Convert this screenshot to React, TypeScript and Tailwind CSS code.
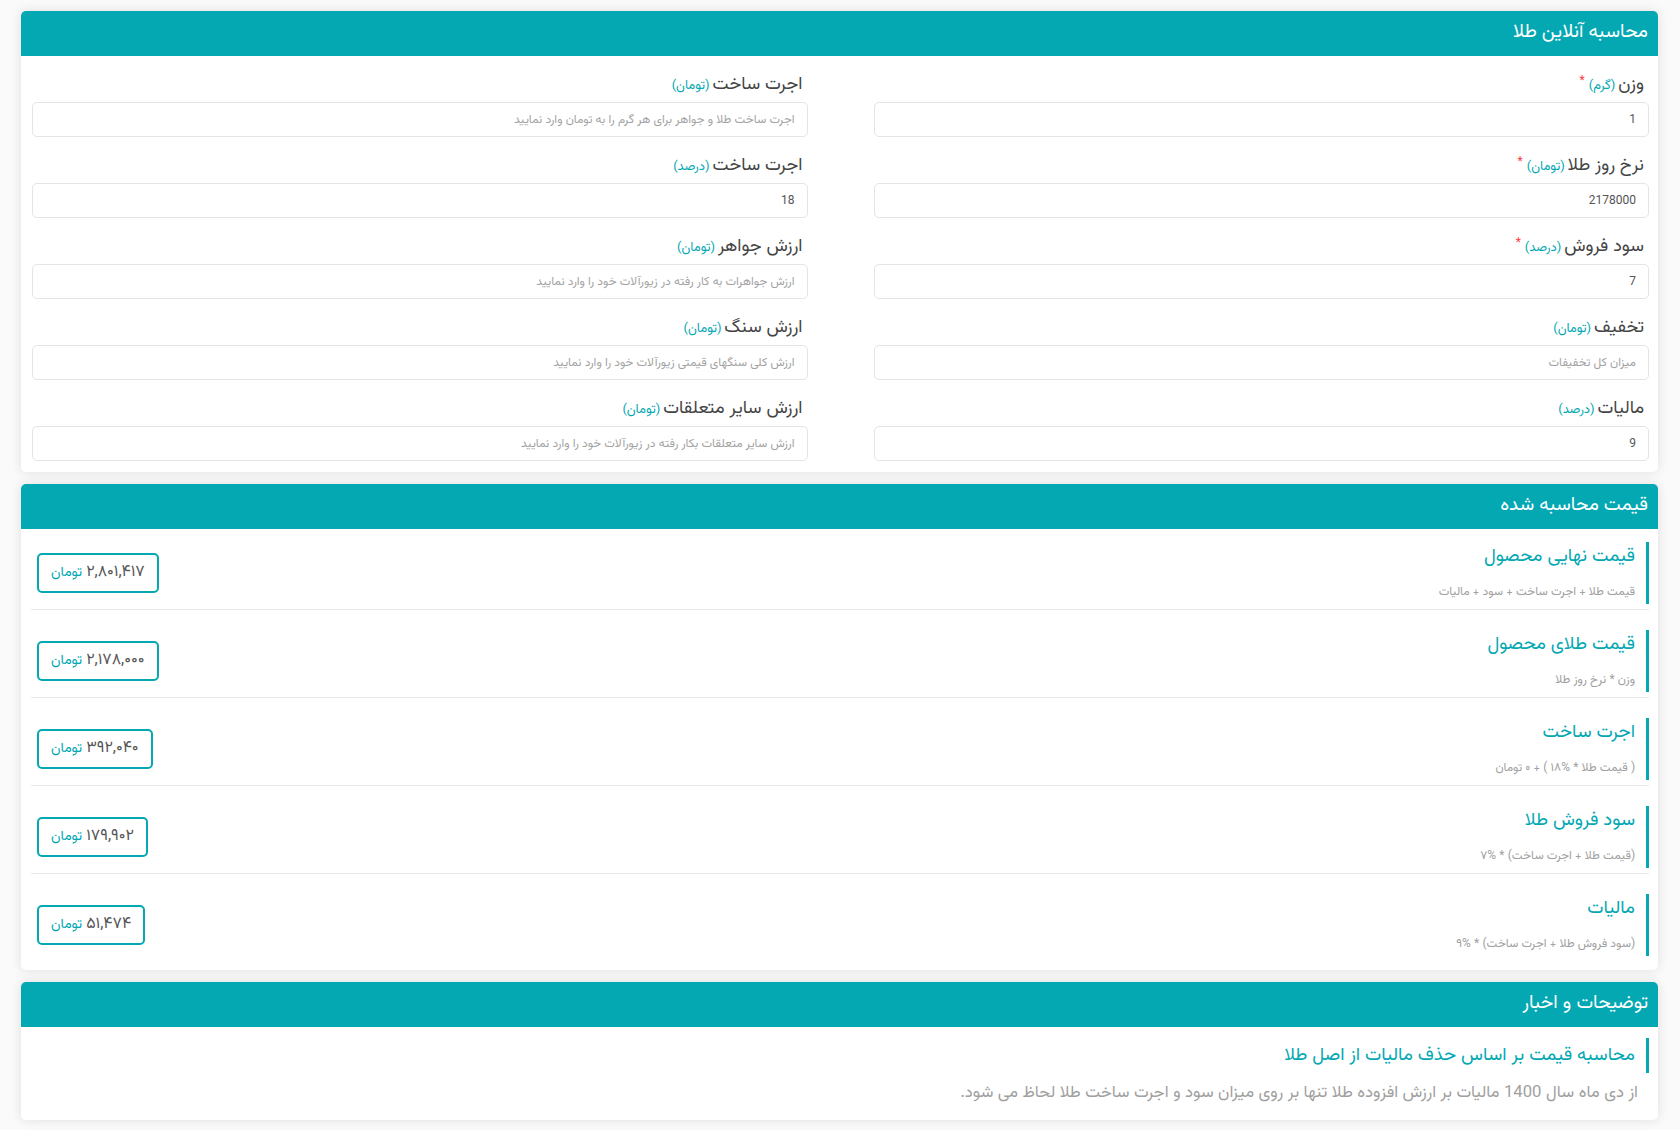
import React from "react";

const TEAL = "#03a8b3";

type Field = {
  label: string;
  unit: string;
  required?: boolean;
  value?: string;
  placeholder?: string;
};

const fields: Field[] = [
  { label: "وزن", unit: "(گرم)", required: true, value: "1" },
  { label: "اجرت ساخت", unit: "(تومان)", placeholder: "اجرت ساخت طلا و جواهر برای هر گرم را به تومان وارد نمایید" },
  { label: "نرخ روز طلا", unit: "(تومان)", required: true, value: "2178000" },
  { label: "اجرت ساخت", unit: "(درصد)", value: "18" },
  { label: "سود فروش", unit: "(درصد)", required: true, value: "7" },
  { label: "ارزش جواهر", unit: "(تومان)", placeholder: "ارزش جواهرات به کار رفته در زیورآلات خود را وارد نمایید" },
  { label: "تخفیف", unit: "(تومان)", placeholder: "میزان کل تخفیفات" },
  { label: "ارزش سنگ", unit: "(تومان)", placeholder: "ارزش کلی سنگهای قیمتی زیورآلات خود را وارد نمایید" },
  { label: "مالیات", unit: "(درصد)", value: "9" },
  { label: "ارزش سایر متعلقات", unit: "(تومان)", placeholder: "ارزش سایر متعلقات بکار رفته در زیورآلات خود را وارد نمایید" },
];

const results = [
  { title: "قیمت نهایی محصول", sub: "قیمت طلا + اجرت ساخت + سود + مالیات", value: "۲,۸۰۱,۴۱۷" },
  { title: "قیمت طلای محصول", sub: "وزن * نرخ روز طلا", value: "۲,۱۷۸,۰۰۰" },
  { title: "اجرت ساخت", sub: "( قیمت طلا * %۱۸ ) + ۰ تومان", value: "۳۹۲,۰۴۰" },
  { title: "سود فروش طلا", sub: "(قیمت طلا + اجرت ساخت) * %۷", value: "۱۷۹,۹۰۲" },
  { title: "مالیات", sub: "(سود فروش طلا + اجرت ساخت) * %۹", value: "۵۱,۴۷۴" },
];

function Header({ title }: { title: string }) {
  return (
    <div className="h-[45px] bg-[#03a8b3] rounded-t-[5px] flex items-center px-[10px] text-white text-[19px]">
      {title}
    </div>
  );
}

export default function App() {
  return (
    <div
      dir="rtl"
      className="min-h-[1130px] bg-[#fafafa] pt-[11px] pb-[11px] pr-[22px] pl-[21px] flex flex-col"
      style={{ fontFamily: '"Vazirmatn", "Noto Sans Arabic", "DejaVu Sans", sans-serif' }}
    >
      {/* Card 1 */}
      <div className="bg-white rounded-[5px] shadow-[0_0_12px_rgba(0,0,0,0.11)]">
        <Header title="محاسبه آنلاین طلا" />
        <div className="grid grid-cols-2 gap-x-[66px] pl-[11px] pr-[9px] pb-[11px]">
          {fields.map((f, i) => (
            <div key={i} className="flex flex-col">
              <div className="h-[46px] pt-[14px] pr-[5px] flex items-start">
                <span className="text-[18px] leading-[30px] text-[#444]">{f.label}</span>
                <span className="text-[13px] leading-[30px] mr-[3px] mt-[1px]" style={{ color: TEAL }}>
                  {f.unit}
                </span>
                {f.required && (
                  <span className="text-[12px] leading-[14px] mr-[4px] mt-[4px] text-[#ff3b3b]">*</span>
                )}
              </div>
              <input
                readOnly
                defaultValue={f.value}
                placeholder={f.placeholder}
                className="h-[35px] w-full border border-[#e4e4e4] rounded-[5px] px-[12px] text-[12px] text-[#555] placeholder:text-[#a3a3a3] outline-none bg-white"
              />
            </div>
          ))}
        </div>
      </div>

      {/* Card 2 */}
      <div className="mt-[12px] bg-white rounded-[5px] shadow-[0_0_12px_rgba(0,0,0,0.11)]">
        <Header title="قیمت محاسبه شده" />
        <div className="pl-[10px] pr-[9px] pb-[9px]">
          {results.map((r, i) => (
            <div
              key={i}
              className={
                "flex items-center justify-between pb-[5px] " +
                (i === 0 ? "pt-[13px] " : "pt-[20px] ") +
                (i < results.length - 1 ? "border-b border-[#e8e8e8]" : "")
              }
            >
              <div className="h-[62px] border-r-[3px] border-[#03a8b3] pr-[11px] flex flex-col">
                <div className="text-[18.5px] leading-[30px]" style={{ color: TEAL }}>
                  {r.title}
                </div>
                <div className="text-[12px] leading-[20px] mt-[10px] text-[#a0a0a0]">{r.sub}</div>
              </div>
              <div className="ml-[6px] h-[40px] border-2 border-[#03a8b3] rounded-[5px] px-[12px] flex items-center gap-[4px]">
                <span className="text-[16px] text-[#555]">{r.value}</span>
                <span className="text-[14px]" style={{ color: TEAL }}>
                  تومان
                </span>
              </div>
            </div>
          ))}
        </div>
      </div>

      {/* Card 3 */}
      <div className="mt-[12px] bg-white rounded-[5px] shadow-[0_0_12px_rgba(0,0,0,0.11)]">
        <Header title="توضیحات و اخبار" />
        <div className="pl-[10px] pr-[9px] pt-[11px] pb-[15px]">
          <div className="h-[35px] border-r-[3px] border-[#03a8b3] pr-[11px] flex items-center">
            <span className="text-[18.5px] leading-[30px]" style={{ color: TEAL }}>
              محاسبه قیمت بر اساس حذف مالیات از اصل طلا
            </span>
          </div>
          <p className="mt-[8px] pr-[11px] text-[16.7px] leading-[24px] text-[#a0a0a0]">
            از دی ماه سال 1400 مالیات بر ارزش افزوده طلا تنها بر روی میزان سود و اجرت ساخت طلا لحاظ می شود.
          </p>
        </div>
      </div>
    </div>
  );
}
